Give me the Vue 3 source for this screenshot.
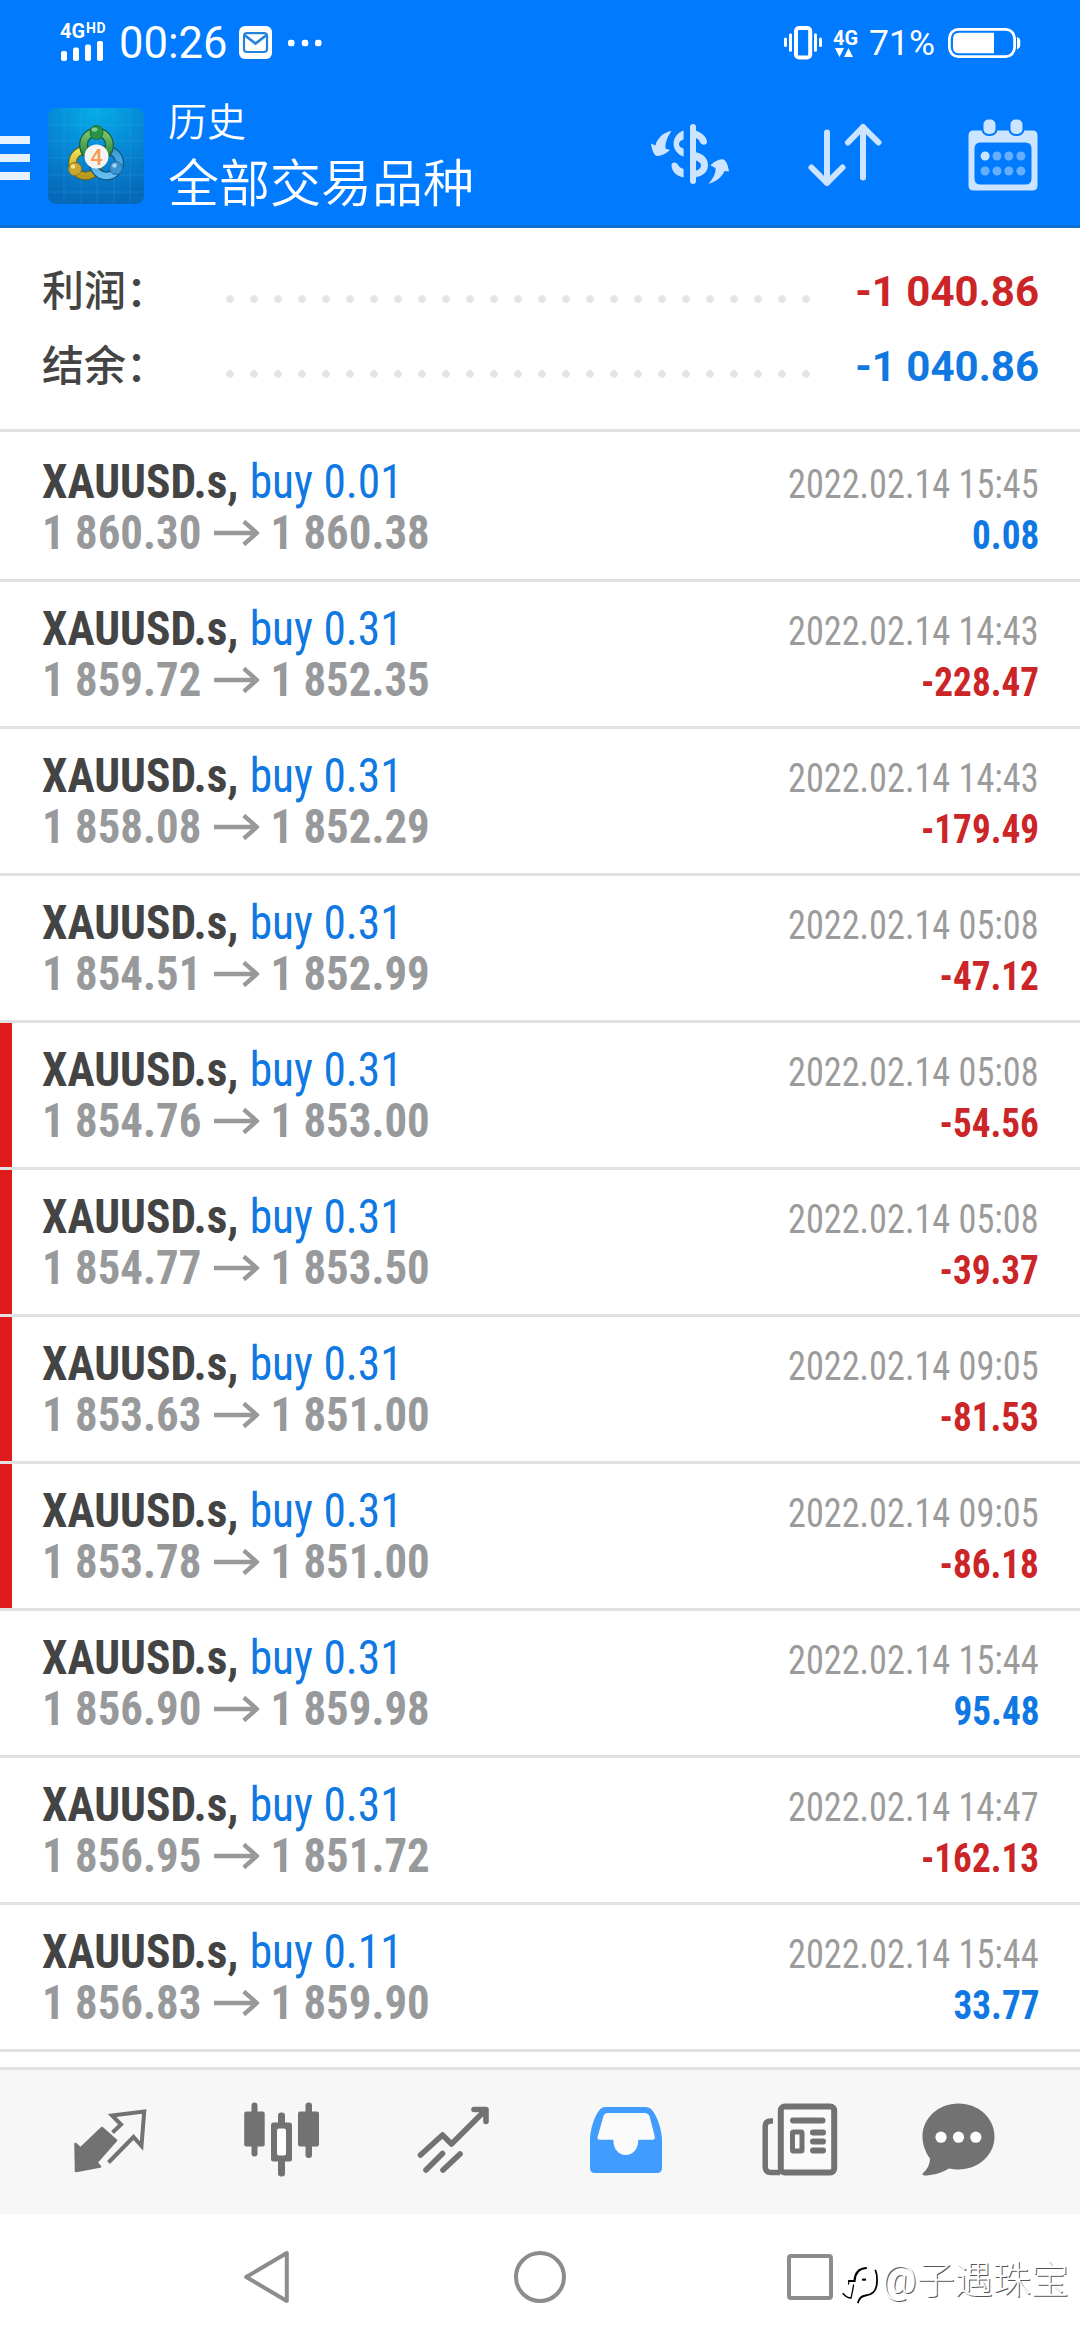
<script setup>
const summary = [
  { label: '利润：', value: '-1 040.86', tone: 'neg' },
  { label: '结余：', value: '-1 040.86', tone: 'pos' },
]

const deals = [
  { lot: '0.01', open: '1 860.30', close: '1 860.38', time: '2022.02.14 15:45', profit: '0.08' },
  { lot: '0.31', open: '1 859.72', close: '1 852.35', time: '2022.02.14 14:43', profit: '-228.47' },
  { lot: '0.31', open: '1 858.08', close: '1 852.29', time: '2022.02.14 14:43', profit: '-179.49' },
  { lot: '0.31', open: '1 854.51', close: '1 852.99', time: '2022.02.14 05:08', profit: '-47.12' },
  { lot: '0.31', open: '1 854.76', close: '1 853.00', time: '2022.02.14 05:08', profit: '-54.56', stop: true },
  { lot: '0.31', open: '1 854.77', close: '1 853.50', time: '2022.02.14 05:08', profit: '-39.37', stop: true },
  { lot: '0.31', open: '1 853.63', close: '1 851.00', time: '2022.02.14 09:05', profit: '-81.53', stop: true },
  { lot: '0.31', open: '1 853.78', close: '1 851.00', time: '2022.02.14 09:05', profit: '-86.18', stop: true },
  { lot: '0.31', open: '1 856.90', close: '1 859.98', time: '2022.02.14 15:44', profit: '95.48' },
  { lot: '0.31', open: '1 856.95', close: '1 851.72', time: '2022.02.14 14:47', profit: '-162.13' },
  { lot: '0.11', open: '1 856.83', close: '1 859.90', time: '2022.02.14 15:44', profit: '33.77' },
]

const tone = (v) => (v.startsWith('-') ? 'neg' : 'pos')
</script>

<template>
  <div class="screen">
    <header class="top">
      <div class="status">
        <div class="signal">
          <div class="net"><span class="g4">4G</span><span class="hd">HD</span></div>
          <svg width="44" height="20" viewBox="61 37 44 20" fill="#fff">
            <rect x="62" y="47" width="6" height="10" rx="2" />
            <rect x="74" y="43.5" width="6" height="13.5" rx="2" />
            <rect x="86" y="40.5" width="6" height="16.5" rx="2" />
            <rect x="98" y="37" width="6" height="20" rx="2" />
          </svg>
        </div>
        <span class="clock">00:26</span>
        <svg class="mail" width="33" height="33" viewBox="239 26 33 33">
          <rect x="239" y="26" width="33" height="33" rx="6" fill="#fff" />
          <rect x="244" y="33.2" width="23" height="18.8" rx="3" fill="#fff" stroke="#2282de" stroke-width="2.2" />
          <path d="M245 35.5 L255.5 43.5 L266 35.5" fill="none" stroke="#2282de" stroke-width="2.6" />
        </svg>
        <svg class="more" width="34" height="8" viewBox="288 39 34 8" fill="#fff">
          <rect x="288" y="39.8" width="6.5" height="6.5" rx="2.4" />
          <rect x="301.8" y="39.8" width="6.5" height="6.5" rx="2.4" />
          <rect x="315" y="39.8" width="6.5" height="6.5" rx="2.4" />
        </svg>
        <div class="spacer"></div>
        <svg width="40" height="34" viewBox="784 26 40 34" fill="#fff">
          <rect x="797" y="28" width="14.2" height="29.5" rx="3" fill="none" stroke="#fff" stroke-width="4" />
          <rect x="785" y="37.5" width="3" height="9.5" rx="1.5" />
          <rect x="790" y="33.3" width="3" height="18.4" rx="1.5" />
          <rect x="815" y="33.3" width="3" height="18.4" rx="1.5" />
          <rect x="820" y="37.5" width="3" height="9.5" rx="1.5" />
        </svg>
        <div class="data">
          <span>4G</span>
          <svg width="18" height="9" viewBox="0 0 18 9" fill="#fff"><path d="M0 0H9L4.5 9ZM9 9H18L13.5 0Z" /></svg>
        </div>
        <span class="pct">71%</span>
        <svg width="73" height="30" viewBox="948 27 73 30" fill="#fff">
          <rect x="949.4" y="28.4" width="65.2" height="27.2" rx="9" fill="none" stroke="#fff" stroke-width="2.8" />
          <path d="M959 31.8H994V52.2H959Q953 52.2 953 46.2V37.8Q953 31.8 959 31.8Z" />
          <path d="M1017 36Q1020.3 37 1020.3 40V44Q1020.3 47 1017 48.4Z" />
        </svg>
      </div>

      <div class="bar">
        <div class="burger"><i></i><i></i><i></i></div>
        <svg class="logo" width="96" height="96" viewBox="0 0 96 96">
          <defs>
            <radialGradient id="sky" cx=".5" cy="0" r="1">
              <stop offset="0" stop-color="#06aee8" /><stop offset=".5" stop-color="#0689d6" /><stop offset="1" stop-color="#0668b8" />
            </radialGradient>
            <linearGradient id="gr" x1="0" y1="0" x2="0" y2="1"><stop offset="0" stop-color="#7cc86a" /><stop offset="1" stop-color="#1e7f35" /></linearGradient>
            <linearGradient id="ye" x1="0" y1="0" x2="0" y2="1"><stop offset="0" stop-color="#f0e25a" /><stop offset="1" stop-color="#b99a1c" /></linearGradient>
            <linearGradient id="bl" x1="0" y1="0" x2="0" y2="1"><stop offset="0" stop-color="#3b9ad6" /><stop offset="1" stop-color="#63bdf0" /></linearGradient>
          </defs>
          <rect width="96" height="96" rx="8" fill="url(#sky)" />
          <path d="M16 0V96M33 0V96M49 0V96M66 0V96M82 0V96M0 17H96M0 33H96M0 50H96M0 67H96M0 84H96" stroke="#4db8ee" stroke-opacity=".2" />
          <circle cx="37.500" cy="55" r="13" fill="none" stroke="#5e6420" stroke-width="9" />
          <circle cx="37.500" cy="55" r="13" fill="none" stroke="url(#ye)" stroke-width="6.500" />
          <circle cx="58.500" cy="55" r="13" fill="none" stroke="#10527f" stroke-width="9" />
          <circle cx="58.500" cy="55" r="13" fill="none" stroke="url(#bl)" stroke-width="6.500" />
          <circle cx="48.500" cy="37" r="13" fill="none" stroke="#1b5a3e" stroke-width="9" />
          <circle cx="48.500" cy="37" r="13" fill="none" stroke="url(#gr)" stroke-width="6.500" />
          <ellipse cx="48.500" cy="24.500" rx="6.500" ry="7" fill="#2c9148" stroke="#1d6a38" />
          <ellipse cx="46.500" cy="21.500" rx="3" ry="2" fill="#7fd08a" />
          <circle cx="27" cy="61" r="6.500" fill="#c9a634" stroke="#8d7a1e" />
          <circle cx="25" cy="58.500" r="2.300" fill="#f2e28a" />
          <circle cx="68" cy="60" r="6.500" fill="#3c93cf" stroke="#1c6aa5" />
          <circle cx="66.500" cy="57.500" r="2.300" fill="#9bd6f8" />
          <circle cx="48.500" cy="48.500" r="12" fill="#f6f4f3" />
          <text x="48.500" y="56.500" text-anchor="middle" font-family="Roboto, sans-serif" font-size="22" font-weight="500" fill="#f59a4e">4</text>
        </svg>
        <div class="titles">
          <div class="t1">历史</div>
          <div class="t2">全部交易品种</div>
        </div>
        <div class="actions">
          <svg width="80" height="62" viewBox="650 123 80 62" fill="#cce4ff">
            <path d="M671.500 131C664 132 657 138 655.500 145.500L651 143.500C652 150 654 156 657.500 156C661 156 667 153 670 150L665.500 148.500C665 142 668 136 671.500 131Z" />
            <path d="M708.400 183.700C716 182 722 177 724.500 171L729 171.500C728 165 726 159 722 159.200C718 159.500 713 162 710.500 165.500L715.500 168C716 173 713 179 708.400 183.700Z" />
            <path d="M683.600 130.500C677 133 673.600 138 673.600 144S678 154.500 683.600 156.700V148.500C680.500 147.500 679 146 679 144S680.500 140.500 683.600 139.500Z" />
            <path d="M671.500 165C671.500 161.500 677 161.500 678 165C679 167 681 168 683.600 169V177.500C676 176 671.500 171 671.500 165Z" />
            <rect x="690" y="124" width="6" height="60" rx="3" />
            <path d="M695 130.500C702 132.500 707 137 707 142C707 145 703 146 700.500 143C699 140 698 138.500 695 138Z" />
            <path d="M695 152C703 153.500 708 158 708 165S703 176 695 177.500V171C699 170 701 168 701 165.500S699 161.500 695 160Z" />
          </svg>
          <svg class="sort" width="76" height="64" viewBox="808 123.500 76 64" fill="none" stroke="#cce4ff" stroke-width="6" stroke-linecap="round" stroke-linejoin="round">
            <path d="M828 133V183.500M812.500 168L828 183.500L843.500 168" />
            <path d="M864 178V127.500M849 143L864 127.500L879.500 143" />
          </svg>
          <svg class="cal" width="70" height="72" viewBox="967.500 118.500 70 72">
            <path fill="#cce4ff" fill-rule="evenodd" d="M973 130H1032Q1037 130 1037 135V185Q1037 190 1032 190H973Q968 190 968 185V135Q968 130 973 130ZM980 142Q974 142 974 148V178Q974 184 980 184H1025Q1031 184 1031 178V148Q1031 142 1025 142Z" />
            <g fill="#cce4ff" stroke="#007aff" stroke-width="4" paint-order="stroke">
              <rect x="983" y="119" width="12" height="14.500" rx="5" /><rect x="1010" y="119" width="12" height="14.500" rx="5" />
            </g>
            <g fill="#66afff">
              <circle cx="984.600" cy="155.500" r="4.500" fill="#cce4ff" /><circle cx="996.500" cy="155.500" r="4.500" /><circle cx="1008.300" cy="155.500" r="4.500" /><circle cx="1020.400" cy="155.500" r="4.500" />
              <circle cx="984.600" cy="170.500" r="4.500" /><circle cx="996.500" cy="170.500" r="4.500" /><circle cx="1008.300" cy="170.500" r="4.500" /><circle cx="1020.400" cy="170.500" r="4.500" />
            </g>
          </svg>
        </div>
      </div>
    </header>

    <section class="summary">
      <div v-for="s in summary" :key="s.label" class="sum">
        <span class="lab">{{ s.label }}</span>
        <span class="leader"></span>
        <span class="val" :class="s.tone">{{ s.value }}</span>
      </div>
    </section>

    <main class="list">
      <article v-for="(d, i) in deals" :key="i" class="deal" :class="{ stop: d.stop }">
        <div class="line">
          <div class="name">
            <span class="sym">XAUUSD.s,</span>
            <span class="side">buy {{ d.lot }}</span>
          </div>
          <span class="time">{{ d.time }}</span>
        </div>
        <div class="line">
          <div class="prices">
            <span>{{ d.open }}</span>
            <svg class="arrow" width="49" height="26" viewBox="0 0 49 26" fill="none" stroke="#98999b" stroke-width="4.500"><path d="M0 13H46M32 1.500L46 13L32 24.500" /></svg>
            <span>{{ d.close }}</span>
          </div>
          <span class="profit" :class="tone(d.profit)">{{ d.profit }}</span>
        </div>
      </article>
    </main>

    <nav class="tabs">
      <svg width="76" height="66" viewBox="72 2107 76 66">
        <path d="M75.500 2144L80.500 2148.500L102 2128L116 2140.500L96.500 2162.500L100 2166.500L76 2171Z" fill="#727272" stroke="#727272" stroke-width="2.500" stroke-linejoin="round" />
        <path d="M112.500 2132.500L121 2124.500L112 2115.500L144.200 2111.500L141.500 2146L133.500 2137L108.500 2162.500" fill="none" stroke="#727272" stroke-width="4" />
      </svg>
      <svg width="76" height="75" viewBox="244 2102.500 76 75" fill="#727272">
        <rect x="251.500" y="2103" width="6" height="54" rx="3" /><rect x="244.200" y="2112" width="20.500" height="35" rx="2" />
        <rect x="278" y="2113" width="7" height="64" rx="3" /><rect x="271" y="2123" width="21" height="39" rx="2.500" />
        <rect x="277" y="2129" width="9" height="27" rx="2" fill="#fff" />
        <rect x="305.500" y="2103" width="6.500" height="55.500" rx="3" /><rect x="298" y="2112" width="21" height="35" rx="2" />
      </svg>
      <svg width="73" height="68" viewBox="417 2105.500 73 68" fill="none" stroke="#727272" stroke-width="5.600" stroke-linecap="round" stroke-linejoin="round">
        <path d="M420.500 2154.500L442.500 2134.500L451.500 2143.500L485.500 2109.500M474 2109H486V2121" />
        <path d="M426 2169.500L442.500 2153M443 2169.500L460 2153.500" />
      </svg>
      <svg width="72" height="66" viewBox="590.500 2106 72 66">
        <path fill="#409cff" fill-rule="evenodd" d="M590.500 2138C591 2127 595 2115 600 2109Q602 2106 606 2106H646Q650 2106 652.500 2109C658 2116 662 2128 662.500 2138V2167Q662.500 2172 657.500 2172H595.500Q590.500 2172 590.500 2167Z" />
        <path fill="#fbfbfb" d="M608.500 2112H644.500Q648.500 2112 650 2115L655.300 2135.500Q655.800 2138.700 653 2138.700H638.800C638.800 2148.500 633 2154 626.300 2154S613.800 2148.500 613.800 2138.700H600.500Q597.200 2138.700 598.200 2135.500L604 2115Q605 2112 608.500 2112Z" />
      </svg>
      <svg width="76" height="73" viewBox="762 2102.500 76 73" fill="none" stroke="#727272">
        <rect x="780.800" y="2106" width="53.400" height="66" rx="4" stroke-width="6" fill="#fafafa" />
        <path d="M773 2120.500H771Q765.200 2120.500 765.200 2126V2166Q765.200 2172 771 2172H780" stroke-width="5.500" />
        <path d="M793 2120H822.500M813 2132H823M813 2141H823M813 2150H823" stroke-width="6" stroke-linecap="round" />
        <rect x="792.500" y="2131.500" width="9.500" height="19" rx="1" stroke-width="5" />
      </svg>
      <svg width="73" height="73" viewBox="921.500 2102.500 73 73">
        <path fill="#727272" d="M958 2103C978 2103 994 2117.500 994 2136S978 2169 958 2169Q953 2169 948.500 2168C940 2173 931 2175 924 2175Q920.500 2174.500 923 2172C927 2169 929.500 2163 929.500 2158C925 2152 922 2144 922 2136C922 2117.500 938 2103 958 2103Z" />
        <g fill="#fff"><circle cx="940.500" cy="2136.700" r="5.600" /><circle cx="958" cy="2136.700" r="5.600" /><circle cx="975.300" cy="2136.700" r="5.600" /></g>
      </svg>
    </nav>

    <footer class="sysnav">
      <svg width="48" height="56" viewBox="243 2249 48 56" fill="none" stroke="#8c8c8c" stroke-width="4" stroke-linejoin="round"><path d="M246.200 2277L286.800 2253V2301Z" /></svg>
      <svg width="54" height="54" viewBox="513 2250 54 54" fill="none" stroke="#8c8c8c" stroke-width="4"><circle cx="540" cy="2277" r="24" /></svg>
      <svg width="48" height="48" viewBox="786 2253 48 48" fill="none" stroke="#8c8c8c" stroke-width="4"><rect x="789" y="2256" width="42" height="42" rx="2" /></svg>
      <div class="mark">
        <svg width="38" height="40" viewBox="841 2265 38 40" fill="none" stroke="#000" stroke-linecap="round">
          <path d="M849 2281H854.500C855 2273 858 2268.500 866 2268" stroke-width="2.200" />
          <path d="M875.500 2270.500C877.500 2275 877.200 2280 876.800 2284C876 2292 872 2295 865.500 2295.500C861.500 2296 859 2299 858 2302.500" stroke-width="1.800" />
          <path d="M853.500 2285C853 2290 852 2294 851 2298C847 2298 845 2296 843 2293.500M849 2281L848.500 2284" stroke-width="1.300" />
          <path d="M863 2279.700H865" stroke-width="2.200" />
        </svg>
        <span>@子遇珠宝</span>
      </div>
    </footer>
  </div>
</template>

<style>
body { margin: 0; background: #fff; }
</style>

<style scoped>
.screen { width: 1080px; height: 2340px; display: flex; flex-direction: column; overflow: hidden; background: #fff; font-family: Roboto, "Noto Sans CJK SC", sans-serif; }
svg { display: block; flex: none; }
.pos { color: #0f78e2; }
.neg { color: #cb2528; }

.top { height: 228px; box-sizing: border-box; background: #007aff; border-bottom: 3px solid #0f6ed2; color: #fff; }
.status { height: 85px; box-sizing: border-box; padding: 0 59px 0 60px; display: flex; align-items: center; }
.signal { width: 59px; height: 44px; }
.net { height: 20px; display: flex; align-items: flex-start; font-weight: 700; line-height: 20px; }
.g4 { font-size: 20px; width: 26px; }
.hd { font-size: 14px; line-height: 14px; letter-spacing: .5px; }
.clock { width: 120px; font-size: 43.5px; line-height: 50px; padding-top: 2px; }
.more { margin-left: 16px; }
.spacer { flex: 1; }
.data { width: 24px; margin: 0 12px 0 10px; font-size: 20px; font-weight: 700; line-height: 20px; }
.data svg { margin-left: 2px; }
.pct { width: 79px; font-size: 35.5px; }

.bar { height: 140px; display: flex; align-items: flex-start; }
.burger { width: 30px; padding-top: 51px; margin-right: 18px; display: flex; flex-direction: column; gap: 10px; }
.burger i { height: 8px; background: #e6f3ff; }
.logo { margin-top: 23px; }
.titles { margin-left: 24px; font-family: "Noto Sans CJK SC", sans-serif; font-weight: 350; padding-top: 12px; white-space: nowrap; }
.t1 { font-size: 39px; line-height: 45px; }
.t2 { font-size: 51px; line-height: 77px; }
.actions { margin-left: auto; width: 388px; margin-right: 42px; display: flex; align-items: flex-start; padding-top: 38px; }
.sort { margin-left: 77px; }
.cal { margin: -4px 0 0 auto; }

.summary { height: 204px; box-sizing: border-box; border-bottom: 3px solid #e2e2e2; padding: 28px 41px 0 42px; margin-bottom: 3px; }
.sum { height: 75px; display: flex; align-items: center; font-size: 42px; line-height: 75px; }
.lab { width: 176px; height: 87px; font-family: "Noto Sans CJK SC", sans-serif; font-weight: 500; color: #444; white-space: nowrap; }
.leader { width: 600px; height: 8px; margin-top: 10px; background: radial-gradient(circle at 12px 4px, #e5e5e5 3.500px, transparent 4.200px) 0 0 / 24px 8px; }
.val { margin-left: auto; height: 79px; font-weight: 700; white-space: nowrap; }

.deal { height: 147px; box-sizing: border-box; padding: 21px 41px 0 42px; border-bottom: 3px solid #e2e2e2; }
.stop { background: linear-gradient(#e01b1b, #e01b1b) 0 0 / 12px 144px no-repeat; }
.line { height: 51px; display: flex; align-items: baseline; justify-content: space-between; font-size: 48px; line-height: 51px; font-stretch: 75%; white-space: nowrap; }
.name, .prices { display: flex; align-items: baseline; transform-origin: 0 50%; }
.name { transform: scaleX(.946); }
.sym { font-weight: 700; color: #444; margin-right: 12px; }
.side { color: #0f78e2; }
.prices { transform: scaleX(.934); font-weight: 700; color: #98999b; }
.arrow { margin: 0 12px 0 13px; align-self: center; }
.time, .profit { font-size: 40px; transform-origin: 100% 50%; }
.time { color: #9b9b9b; transform: scaleX(.906); }
.profit { font-weight: 700; transform: scaleX(.93); }

.tabs { height: 147px; box-sizing: border-box; margin-top: 15px; border-top: 3px solid #e2e2e2; background: #f7f7f7; padding: 0 0 5px 72px; display: flex; align-items: center; }
.tabs svg:nth-child(2) { margin-left: 96px; }
.tabs svg:nth-child(3) { margin-left: 97px; }
.tabs svg:nth-child(4) { margin-left: 100px; }
.tabs svg:nth-child(5) { margin-left: 100px; }
.tabs svg:nth-child(6) { margin-left: 84px; }
.sysnav { flex: 1; display: flex; align-items: center; padding: 0 11px 0 243px; }
.sysnav > svg:nth-child(2) { margin-left: 222px; }
.sysnav > svg:nth-child(3) { margin-left: 219px; }
.mark { display: flex; align-items: center; margin-left: 7px; font-size: 38px; font-weight: 300; color: #fff; text-shadow: 1px 1px 0 #555; white-space: nowrap; }
.mark svg { margin-top: 16px; }
.mark span { margin-left: 3px; padding-bottom: 2px; }
</style>
